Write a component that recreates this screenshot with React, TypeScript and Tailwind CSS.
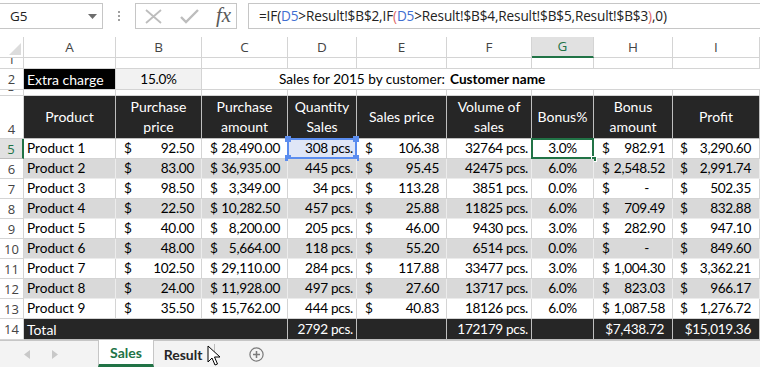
import React from "react";

const W = [
  "w-[24px]",
  "w-[92px]",
  "w-[86px]",
  "w-[86px]",
  "w-[69px]",
  "w-[90px]",
  "w-[85px]",
  "w-[62px]",
  "w-[79px]",
  "w-[87px]",
];

const CAL = "font-['Lato',sans-serif]";
const UI = "font-['Open_Sans',sans-serif]";

type CellProps = {
  c: number;
  cls?: string;
  children?: React.ReactNode;
};

function Cell({ c, cls = "", children }: CellProps) {
  return (
    <div className={`${W[c]} shrink-0 box-border border-r border-b flex ${cls}`}>
      {children}
    </div>
  );
}

function RowHead({ n, cls = "", active = false }: { n: string; cls?: string; active?: boolean }) {
  return (
    <div
      className={`w-[24px] shrink-0 box-border border-b border-r ${
        active
          ? "bg-[#e1e1e1] text-[#217346] border-r-2 border-r-[#217346] border-b-[#bcbcbc]"
          : "bg-white text-[#444] border-[#d4d4d4]"
      } ${UI} text-[13px] tracking-normal flex justify-center overflow-hidden ${cls}`}
    >
      <span className="leading-[18px]">{n}</span>
    </div>
  );
}

function Acc({ v, pr = "pr-[7px]", pl = "pl-[8px]" }: { v: string; pr?: string; pl?: string }) {
  return (
    <div className={`flex-1 flex justify-between items-center ${pl} ${pr}`}>
      <span>$</span>
      <span className={v === "-" ? "pr-[16px]" : ""}>{v}</span>
    </div>
  );
}

const rows = [
  ["Product 1", "92.50", "28,490.00", "308", "106.38", "32764", "3.0%", "982.91", "3,290.60"],
  ["Product 2", "83.00", "36,935.00", "445", "95.45", "42475", "6.0%", "2,548.52", "2,991.74"],
  ["Product 3", "98.50", "3,349.00", "34", "113.28", "3851", "0.0%", "-", "502.35"],
  ["Product 4", "22.50", "10,282.50", "457", "25.88", "11825", "6.0%", "709.49", "832.88"],
  ["Product 5", "40.00", "8,200.00", "205", "46.00", "9430", "3.0%", "282.90", "947.10"],
  ["Product 6", "48.00", "5,664.00", "118", "55.20", "6514", "0.0%", "-", "849.60"],
  ["Product 7", "102.50", "29,110.00", "284", "117.88", "33477", "3.0%", "1,004.30", "3,362.21"],
  ["Product 8", "24.00", "11,928.00", "497", "27.60", "13717", "6.0%", "823.03", "966.17"],
  ["Product 9", "35.50", "15,762.00", "444", "40.83", "18126", "6.0%", "1,087.58", "1,276.72"],
];

function FormulaBar() {
  return (
    <div className="h-[37px] bg-white flex items-start pt-[3px] relative">
      <div className={`w-[103px] h-[26px] box-border border border-[#c6c6c6] border-l-0 flex items-center justify-between pl-[10px] pr-[5px] ${UI} text-[13.5px] text-[#222]`}>
        <span>G5</span>
        <svg width="9" height="5" viewBox="0 0 9 5">
          <path d="M0 0 L9 0 L4.5 5 Z" fill="#6d6d6d" />
        </svg>
      </div>
      <div className="w-[32px] h-[26px] flex flex-col items-center justify-center gap-[2px]">
        <div className="w-[2px] h-[2px] bg-[#a0a0a0]" />
        <div className="w-[2px] h-[2px] bg-[#a0a0a0]" />
        <div className="w-[2px] h-[2px] bg-[#a0a0a0]" />
      </div>
      <div className="w-[102px] h-[26px] box-border border border-[#c6c6c6] flex items-center pl-[9px]">
        <svg width="17" height="15" viewBox="0 0 17 15">
          <path d="M1 1 L16 14 M16 1 L1 14" stroke="#bdbdbd" strokeWidth="1.8" fill="none" />
        </svg>
        <svg className="ml-[18px]" width="19" height="15" viewBox="0 0 19 15">
          <path d="M1 8 L6 13 L18 1" stroke="#bdbdbd" strokeWidth="2.4" fill="none" />
        </svg>
        <span className="ml-[17px] font-['Liberation_Serif',serif] italic text-[21px] leading-none text-[#5a5a5a] -mt-[2px]">
          fx
        </span>
      </div>
      <div className="w-[11px]" />
      <div className={`flex-1 h-[26px] box-border border border-[#c6c6c6] border-r-0 flex items-center pl-[10px] ${UI} text-[13.6px] text-[#222] tracking-[-0.15px] whitespace-nowrap`}>
        <span>=IF(</span>
        <span className="text-[#3f6fd1]">D5</span>
        <span>&gt;Result!$B$2,IF</span>
        <span className="text-[#e06666]">(</span>
        <span className="text-[#3f6fd1]">D5</span>
        <span>&gt;Result!$B$4,Result!$B$5,Result!$B$3</span>
        <span className="text-[#e06666]">)</span>
        <span>,0)</span>
      </div>
    </div>
  );
}

function ColHeaders() {
  const letters = ["A", "B", "C", "D", "E", "F", "G", "H", "I"];
  return (
    <div className={`flex h-[21px] ${UI} text-[13.5px] text-[#444]`}>
      <div className="w-[24px] shrink-0 box-border border-r border-b border-[#d4d4d4] relative bg-white">
        <svg className="absolute right-[2px] bottom-[2px]" width="12" height="12" viewBox="0 0 12 12">
          <path d="M12 0 L12 12 L0 12 Z" fill="#dcdcdc" />
        </svg>
      </div>
      {letters.map((l, i) =>
        l === "G" ? (
          <div
            key={l}
            className={`${W[i + 1]} shrink-0 box-border border-r border-[#d4d4d4] border-b-2 border-b-[#217346] bg-[#e1e1e1] text-[#217346] flex items-center justify-center`}
          >
            {l}
          </div>
        ) : (
          <div
            key={l}
            className={`${W[i + 1]} shrink-0 box-border border-r border-b border-[#d4d4d4] bg-white flex items-center justify-center`}
          >
            {l}
          </div>
        )
      )}
    </div>
  );
}

function Sheet() {
  const g = "border-[#d4d4d4]";
  return (
    <div className={`${CAL} text-[13.6px] tracking-[-0.3px] text-black`}>
      {/* row 1 */}
      <div className="flex h-[11px]">
        <RowHead n="1" cls="items-end" />
        {[1, 2, 3, 4, 5, 6, 7, 8, 9].map((c) => (
          <Cell key={c} c={c} cls={`${g} bg-white`} />
        ))}
      </div>
      {/* row 2 */}
      <div className="flex h-[21px]">
        <RowHead n="2" cls="items-center" />
        <Cell c={1} cls={`${g} bg-black text-white items-center pl-[3px] text-[14px] tracking-normal`}>
          Extra charge
        </Cell>
        <Cell c={2} cls={`${g} bg-[#f2f2f2] items-center justify-center`}>
          15.0%
        </Cell>
        <div className={`w-[245px] shrink-0 box-border border-b ${g} bg-white flex items-center justify-end pr-[2px] tracking-normal`}>
          Sales for 2015 by customer:
        </div>
        <div className={`w-[313px] shrink-0 box-border border-b ${g} bg-white flex items-center pl-[3px] font-bold tracking-normal`}>
          Customer name
        </div>
      </div>
      {/* row 3 */}
      <div className="flex h-[6px]">
        <RowHead n="3" cls="items-end" />
        {[1, 2, 3, 4, 5, 6, 7, 8, 9].map((c) => (
          <Cell key={c} c={c} cls={`${g} bg-white`} />
        ))}
      </div>
      {/* row 4 */}
      <div className="flex h-[43px]">
        <RowHead n="4" cls="items-end" />
        {[
          "Product",
          "Purchase\nprice",
          "Purchase\namount",
          "Quantity\nSales",
          "Sales price",
          "Volume of\nsales",
          "Bonus%",
          "Bonus\namount",
          "Profit",
        ].map((t, i) => (
          <Cell
            key={i}
            c={i + 1}
            cls="border-[#bfbfbf] bg-[#262626] text-white items-center justify-center text-center whitespace-pre-line leading-[20px] text-[14px] tracking-normal"
          >
            <span>{t}</span>
          </Cell>
        ))}
      </div>
      {/* data rows */}
      {rows.map((r, idx) => {
        const gray = idx % 2 === 1;
        const bg = gray ? "bg-[#d9d9d9] border-[#ececec]" : "bg-white border-[#d4d4d4]";
        const first = idx === 0;
        return (
          <div key={idx} className="flex h-[20px]">
            <RowHead n={String(idx + 5)} cls="items-center" active={first} />
            <Cell c={1} cls={`${bg} items-center pl-[3px] tracking-normal`}>
              {r[0]}
            </Cell>
            <Cell c={2} cls={bg}>
              <Acc v={r[1]} />
            </Cell>
            <Cell c={3} cls={bg}>
              <Acc v={r[2]} />
            </Cell>
            <Cell
              c={4}
              cls={`${first ? "bg-[#dfe6f7] border-[#d4d4d4]" : bg} items-center justify-end pr-[3px] relative`}
            >
              {r[3]} pcs.
              {first && (
                <>
                  <div className="absolute -left-[1px] -top-[1px] -right-[1px] -bottom-[1px] border-2 border-[#5b8def]" />
                  <div className="absolute -left-[3px] -top-[3px] w-[6px] h-[6px] bg-[#5b8def]" />
                  <div className="absolute -right-[3px] -top-[3px] w-[6px] h-[6px] bg-[#5b8def]" />
                  <div className="absolute -left-[3px] -bottom-[3px] w-[6px] h-[6px] bg-[#5b8def]" />
                  <div className="absolute -right-[3px] -bottom-[3px] w-[6px] h-[6px] bg-[#5b8def]" />
                </>
              )}
            </Cell>
            <Cell c={5} cls={bg}>
              <Acc v={r[4]} />
            </Cell>
            <Cell c={6} cls={`${bg} items-center justify-end pr-[3px]`}>
              {r[5]} pcs.
            </Cell>
            <Cell c={7} cls={`${bg} items-center justify-center relative`}>
              {r[6]}
              {first && (
                <>
                  <div className="absolute -left-[1px] -top-[1px] -right-[1px] -bottom-[1px] border-2 border-[#217346]" />
                  <div className="absolute -right-[4px] -bottom-[4px] w-[6px] h-[6px] bg-[#217346] border border-white" />
                </>
              )}
            </Cell>
            <Cell c={8} cls={bg}>
              <Acc v={r[7]} />
            </Cell>
            <Cell c={9} cls={bg}>
              <Acc v={r[8]} pl="pl-[7px]" pr="pr-[8px]" />
            </Cell>
          </div>
        );
      })}
      {/* row 14 */}
      <div className="flex h-[21px]">
        <RowHead n="14" cls="items-center" />
        <div className="w-[264px] shrink-0 box-border border-r border-b border-[#bfbfbf] bg-[#262626] text-white flex items-center pl-[3px] text-[14px] tracking-normal">
          Total
        </div>
        <Cell c={4} cls="border-[#bfbfbf] bg-[#262626] text-white items-center justify-end pr-[3px]">
          2792 pcs.
        </Cell>
        <Cell c={5} cls="border-[#bfbfbf] bg-[#262626]" />
        <Cell c={6} cls="border-[#bfbfbf] bg-[#262626] text-white items-center justify-end pr-[3px]">
          172179 pcs.
        </Cell>
        <Cell c={7} cls="border-[#bfbfbf] bg-[#262626]" />
        <Cell c={8} cls="border-[#bfbfbf] bg-[#262626] text-white items-center justify-end pr-[8px]">
          $7,438.72
        </Cell>
        <Cell c={9} cls="border-[#bfbfbf] bg-[#262626] text-white items-center justify-end pr-[8px]">
          $15,019.36
        </Cell>
      </div>
    </div>
  );
}

function Tabs() {
  return (
    <div className={`h-[27px] bg-[#f3f3f3] border-t border-[#c6c6c6] flex items-stretch relative ${CAL}`}>
      <div className="w-[98px] flex items-center">
        <svg className="ml-[24px]" width="6" height="9" viewBox="0 0 6 9">
          <path d="M6 0 L6 9 L0 4.5 Z" fill="#c8c8c8" />
        </svg>
        <svg className="ml-[22px]" width="6" height="9" viewBox="0 0 6 9">
          <path d="M0 0 L0 9 L6 4.5 Z" fill="#c8c8c8" />
        </svg>
      </div>
      <div className="w-[56px] -mt-[1px] bg-white box-border border-l border-r border-[#c6c6c6] border-b-[3px] border-b-[#217346] flex items-center justify-center font-bold text-[14px] text-[#217346]">
        Sales
      </div>
      <div className="w-[60px] flex items-center justify-center font-bold text-[14px] text-[#262626] pr-[2px]">
        Result
      </div>
      <div className="w-[1px] bg-[#bdbdbd] my-[3px]" />
      <div className="flex items-center ml-[34px]">
        <svg width="15" height="15" viewBox="0 0 15 15">
          <circle cx="7.5" cy="7.5" r="6.6" stroke="#7a7a7a" strokeWidth="1.2" fill="none" />
          <path d="M7.5 4 L7.5 11 M4 7.5 L11 7.5" stroke="#7a7a7a" strokeWidth="1.5" />
        </svg>
      </div>
      <svg className="absolute left-[207px] top-[4px]" width="14" height="22" viewBox="0 0 14 22">
        <path
          d="M1 1 L1 17 L5 13 L8 20 L10.5 19 L7.5 12 L13 12 Z"
          fill="white"
          stroke="black"
          strokeWidth="1"
          strokeLinejoin="round"
        />
      </svg>
    </div>
  );
}

export default function App() {
  return (
    <div className="w-[760px] h-[367px] overflow-hidden bg-white">
      <FormulaBar />
      <ColHeaders />
      <Sheet />
      <Tabs />
    </div>
  );
}
